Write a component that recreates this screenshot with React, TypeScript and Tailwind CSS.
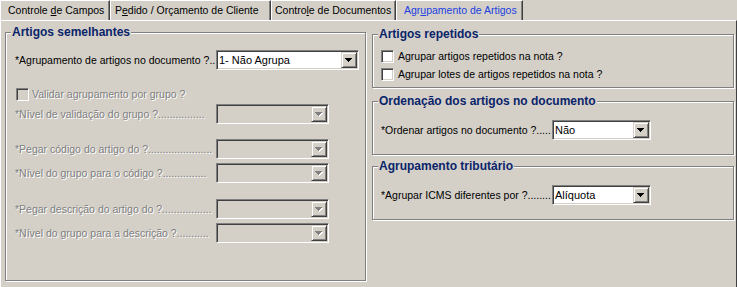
import React from "react";

function DropArrow({ disabled }: { disabled?: boolean }) {
  return (
    <svg width="8" height="5" viewBox="0 0 8 5" shapeRendering="crispEdges" className="block">
      {disabled && (
        <g fill="#ffffff">
          <rect x="1" y="1" width="7" height="1" />
          <rect x="2" y="2" width="5" height="1" />
          <rect x="3" y="3" width="3" height="1" />
          <rect x="4" y="4" width="1" height="1" />
        </g>
      )}
      <g fill={disabled ? "#808080" : "#000000"}>
        <rect x="0" y="0" width="7" height="1" />
        <rect x="1" y="1" width="5" height="1" />
        <rect x="2" y="2" width="3" height="1" />
        <rect x="3" y="3" width="1" height="1" />
      </g>
    </svg>
  );
}

function Combo({ width, value, disabled }: { width: string; value?: string; disabled?: boolean }) {
  return (
    <div
      className={`${width} h-[20px] shrink-0 flex items-stretch p-[1px] border border-t-[#808080] border-l-[#808080] border-r-white border-b-white shadow-[inset_1px_1px_0_#404040,inset_-1px_-1px_0_#d4d0c8] ${
        disabled ? "bg-[#d4d0c8]" : "bg-white"
      }`}
    >
      <div className="flex-1 flex items-center pl-[1px] text-[11px] leading-none text-black whitespace-nowrap overflow-hidden">
        {value}
      </div>
      <div className="w-[16px] flex items-center justify-center bg-[#d4d0c8] border border-t-[#d4d0c8] border-l-[#d4d0c8] border-r-[#404040] border-b-[#404040] shadow-[inset_1px_1px_0_#ffffff,inset_-1px_-1px_0_#808080]">
        <DropArrow disabled={disabled} />
      </div>
    </div>
  );
}

function CheckBox({ disabled }: { disabled?: boolean }) {
  return (
    <div
      className={`w-[13px] h-[13px] shrink-0 border border-t-[#808080] border-l-[#808080] border-r-white border-b-white shadow-[inset_1px_1px_0_#404040,inset_-1px_-1px_0_#d4d0c8] ${
        disabled ? "bg-[#d4d0c8]" : "bg-white"
      }`}
    />
  );
}

function GroupBox({
  title,
  outer,
  children,
}: {
  title: string;
  outer: string;
  children: React.ReactNode;
}) {
  return (
    <div className={`pt-[7px] ${outer}`}>
      <div className="h-full border border-[#808080] shadow-[inset_1px_1px_0_#ffffff,1px_1px_0_#ffffff] flex flex-col">
        <div className="-mt-[8px] ml-[5px] self-start px-[1px] bg-[#d4d0c8] font-bold text-[12px] leading-[14px] text-[#0a246a] whitespace-nowrap">
          {title}
        </div>
        {children}
      </div>
    </div>
  );
}

function Label({ text, width, disabled }: { text: string; width: string; disabled?: boolean }) {
  return (
    <div
      className={`${width} shrink-0 whitespace-nowrap text-[10.5px] leading-[13px] ${
        disabled ? "text-[#808080] [text-shadow:1px_1px_0_#ffffff]" : "text-black"
      }`}
    >
      {text}
    </div>
  );
}

export default function App() {
  return (
    <div className="w-[737px] h-[287px] overflow-hidden bg-[#d4d0c8] font-['Liberation_Sans',Arial,sans-serif] text-black select-none flex flex-col">
      {/* Tabs */}
      <div className="h-[20px] flex items-stretch text-[10.5px] leading-none whitespace-nowrap">
        <div className="w-[110px] pl-[7px] flex items-center border-l border-t border-l-white border-t-white border-r border-r-[#404040] shadow-[inset_-1px_0_0_#808080]">
          <span>
            Controle <span className="underline">d</span>e Campos
          </span>
        </div>
        <div className="w-[161px] pl-[4px] flex items-center border-l border-t border-l-white border-t-white border-r border-r-[#404040] shadow-[inset_-1px_0_0_#808080]">
          <span>
            P<span className="underline">e</span>dido / Orçamento de Cliente
          </span>
        </div>
        <div className="w-[125px] pl-[3px] flex items-center border-l border-t border-l-white border-t-white border-r border-r-[#404040] shadow-[inset_-1px_0_0_#808080]">
          <span>
            Contro<span className="underline">l</span>e de Documentos
          </span>
        </div>
        <div className="w-[127px] pl-[7px] flex items-center border-l border-t border-l-white border-t-white border-r border-r-[#404040] shadow-[inset_-1px_0_0_#808080] text-[#2040e0]">
          <span>
            Agr<span className="underline">u</span>pamento de Artigos
          </span>
        </div>
      </div>

      {/* Panel */}
      <div className="flex-1 flex items-start border-t border-l border-t-white border-l-white border-r border-r-[#404040]">
        {/* Left group */}
        <GroupBox title="Artigos semelhantes" outer="ml-[4px] mt-[4px] w-[361px] h-[256px]">
          <div className="flex flex-col pl-[9px]">
            <div className="mt-[11px] h-[20px] flex items-center">
              <Label width="w-[201px]" text="*Agrupamento de artigos no documento ?.." />
              <Combo width="w-[143px]" value="1- Não Agrupa" />
            </div>
            <div className="mt-[14px] h-[20px] flex items-center">
              <div className="ml-[1px]">
                <CheckBox disabled />
              </div>
              <div className="ml-[3px]">
                <Label width="w-[200px]" text="Validar agrupamento por grupo ?" disabled />
              </div>
            </div>
            <div className="h-[20px] flex items-center">
              <Label width="w-[201px]" text="*Nível de validação do grupo ?................" disabled />
              <Combo width="w-[113px]" disabled />
            </div>
            <div className="mt-[15px] h-[20px] flex items-center">
              <Label width="w-[201px]" text="*Pegar código do artigo do ?......................" disabled />
              <Combo width="w-[113px]" disabled />
            </div>
            <div className="mt-[4px] h-[20px] flex items-center">
              <Label width="w-[201px]" text="*Nível do grupo para o código ?..............." disabled />
              <Combo width="w-[113px]" disabled />
            </div>
            <div className="mt-[16px] h-[20px] flex items-center">
              <Label width="w-[201px]" text="*Pegar descrição do artigo do ?................." disabled />
              <Combo width="w-[113px]" disabled />
            </div>
            <div className="mt-[4px] h-[20px] flex items-center">
              <Label width="w-[201px]" text="*Nível do grupo para a descrição ?..........." disabled />
              <Combo width="w-[113px]" disabled />
            </div>
          </div>
        </GroupBox>

        {/* Right column */}
        <div className="ml-[6px] mt-[6px] w-[362px] flex flex-col">
          <GroupBox title="Artigos repetidos" outer="h-[61px]">
            <div className="flex flex-col pl-[8px] mt-[6px]">
              <div className="h-[18px] flex items-center">
                <CheckBox />
                <div className="ml-[4px]">
                  <Label width="w-[300px]" text="Agrupar artigos repetidos na nota ?" />
                </div>
              </div>
              <div className="h-[18px] flex items-center">
                <CheckBox />
                <div className="ml-[4px]">
                  <Label width="w-[300px]" text="Agrupar lotes de artigos repetidos na nota ?" />
                </div>
              </div>
            </div>
          </GroupBox>

          <GroupBox title="Ordenação dos artigos no documento" outer="mt-[6px] h-[61px]">
            <div className="pl-[8px] mt-[12px] h-[20px] flex items-center">
              <Label width="w-[171px]" text="*Ordenar artigos no documento ?....." />
              <Combo width="w-[99px]" value="Não" />
            </div>
          </GroupBox>

          <GroupBox title="Agrupamento tributário" outer="mt-[4px] h-[61px]">
            <div className="pl-[8px] mt-[12px] h-[20px] flex items-center">
              <Label width="w-[171px]" text="*Agrupar ICMS diferentes por ?........" />
              <Combo width="w-[99px]" value="Alíquota" />
            </div>
          </GroupBox>
        </div>
      </div>
    </div>
  );
}
